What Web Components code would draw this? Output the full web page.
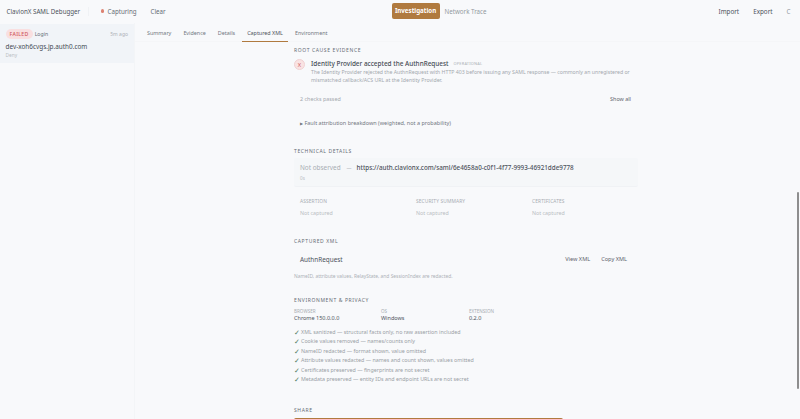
<!DOCTYPE html>
<html>
<head>
<meta charset="utf-8">
<title>ClavionX SAML Debugger</title>
<style>
html, body { margin: 0; height: 100%; overflow: hidden; background: #f8f9fb; }
body { font-family: "Noto Sans", "Open Sans", sans-serif; color: #3a4049; font-size: 6.5px; }
.shell { display: flex; height: 396px; }
</style>
</head>
<body>
<app-header></app-header>
<div class="shell">
	<session-list></session-list>
	<main-pane>
		<tab-bar></tab-bar>
		<root-cause></root-cause>
		<technical-details></technical-details>
		<captured-xml></captured-xml>
		<env-privacy></env-privacy>
		<share-block></share-block>
	</main-pane>
</div>
<script>
class AppHeader extends HTMLElement {
	constructor() {
		super();
		this.attachShadow({ mode: "open" }).innerHTML = `
		<style>
		:host { display: flex; align-items: center; height: 23px; padding: 0 0 1px 6.5px; box-sizing: border-box; font-size: 6.2px; color: #4d535c; }
		.brand { width: 81px; border-right: 1px solid #f0f2f5; }
		.capturing { display: flex; align-items: center; gap: 3.5px; margin-left: 12px; color: #666c75; }
		.dot { width: 3.5px; height: 3.5px; border-radius: 50%; background: #dd8272; }
		.clear { margin-left: 14px; color: #666c75; }
		.modes { display: flex; align-items: center; margin-left: 226px; }
		.on { width: 48px; height: 16px; line-height: 16px; text-align: center; background: #b07a3f; color: #fff; font-weight: 700; border-radius: 2px; }
		.off { margin-left: 5px; color: #94999f; }
		.right { display: flex; margin-left: auto; font-size: 6.3px; }
		.right span { margin-right: 14px; }
		.right span:last-child { margin-right: 9.5px; color: #94999f; }
		</style>
		<div class="brand">ClavionX SAML Debugger</div>
		<div class="capturing"><span class="dot"></span>Capturing</div>
		<div class="clear">Clear</div>
		<div class="modes"><div class="on">Investigation</div><div class="off">Network Trace</div></div>
		<div class="right"><span>Import</span><span>Export</span><span>C</span></div>`;
	}
}

class SessionList extends HTMLElement {
	constructor() {
		super();
		this.attachShadow({ mode: "open" }).innerHTML = `
		<style>
		:host { display: block; width: 135px; flex: none; border-right: 1px solid #f3f5f7; box-sizing: border-box; padding-top: 1px; }
		.item { background: #f1f4f8; height: 39px; padding: 5px 6px 0 5.5px; box-sizing: border-box; }
		.top { display: flex; align-items: center; }
		.pill { background: #f9dfe0; color: #d0575c; font-size: 5.2px; font-weight: 500; border-radius: 5px; height: 10px; line-height: 10px; padding: 0 4px; letter-spacing: .3px; }
		.kind { margin-left: 2px; font-size: 5.2px; color: #666c75; }
		.ago { margin-left: auto; font-size: 5px; color: #adb1b7; }
		.host { margin-top: 3px; font-size: 6.4px; color: #454b54; line-height: 9px; }
		.deny { margin-top: 1px; font-size: 4.8px; color: #b9bdc2; line-height: 7px; }
		</style>
		<div class="item">
			<div class="top"><span class="pill">FAILED</span><span class="kind">Login</span><span class="ago">5m ago</span></div>
			<div class="host">dev-xoh6cvgs.jp.auth0.com</div>
			<div class="deny">Deny</div>
		</div>`;
	}
}

class MainPane extends HTMLElement {
	constructor() {
		super();
		this.attachShadow({ mode: "open" }).innerHTML = `
		<style>
		:host { display: block; flex: 1; position: relative; overflow: hidden; }
		.thumb { position: absolute; right: 1px; top: 169px; width: 2px; height: 197px; background: #8e8e8e; border-radius: 1px; }
		</style>
		<slot></slot><div class="thumb"></div>`;
	}
}

class TabBar extends HTMLElement {
	constructor() {
		super();
		this.attachShadow({ mode: "open" }).innerHTML = `
		<style>
		:host { display: flex; height: 19px; padding-left: 6.5px; border-bottom: 1px solid #f5f6f8; box-sizing: border-box; font-size: 5.4px; color: #72777f; gap: 1px; }
		span { padding: 6px 5.5px 0; height: 18px; box-sizing: border-box; line-height: 8px; }
		.cur { color: #4d535c; border-bottom: 1px solid #b07a3f; height: 19px; }
		</style>
		<span>Summary</span><span>Evidence</span><span>Details</span><span class="cur">Captured XML</span><span>Environment</span>`;
	}
}

const sectionCss = `
	:host { display: block; margin-left: 159px; width: 344px; }
	h3 { margin: 0; font-size: 5px; font-weight: 400; letter-spacing: .62px; line-height: 7px; color: #666c75; }
`;

class RootCause extends HTMLElement {
	constructor() {
		super();
		this.attachShadow({ mode: "open" }).innerHTML = `
		<style>${sectionCss}
		:host { padding-top: 5px; }
		.row { display: flex; margin: 5px 0 0; }
		.x { width: 11px; height: 11px; border-radius: 50%; background: #f9e3e3; border: .5px solid #f0d2d3; box-sizing: border-box; color: #cf5a5e; font-size: 5.6px; line-height: 10px; text-align: center; flex: none; margin-right: 6px; }
		.title { font-size: 6.4px; color: #454b54; font-weight: 500; line-height: 9px; display: flex; align-items: center; }
		.tag { font-size: 3.9px; color: #b5b9be; margin-left: 5px; letter-spacing: .2px; }
		.desc { font-size: 5.2px; line-height: 8px; color: #a3a8ae; width: 324px; }
		.checks { display: flex; justify-content: space-between; margin: 11px 7px 0 6px; line-height: 8px; font-size: 5.4px; color: #a3a8ae; }
		.checks b { font-weight: 400; color: #5d636c; }
		.fault { margin: 16px 0 0 6px; line-height: 8px; font-size: 5.5px; color: #72777f; }
		.fault i { font-style: normal; font-size: 4px; }
		</style>
		<h3>ROOT CAUSE EVIDENCE</h3>
		<div class="row">
			<div class="x">X</div>
			<div>
				<div class="title">Identity Provider accepted the AuthnRequest<span class="tag">OPERATIONAL</span></div>
				<div class="desc">The Identity Provider rejected the AuthnRequest with HTTP 403 before issuing any SAML response — commonly an unregistered or mismatched callback/ACS URL at the Identity Provider.</div>
			</div>
		</div>
		<div class="checks"><span>2 checks passed</span><b>Show all</b></div>
		<div class="fault"><i>▶</i> Fault attribution breakdown (weighted, not a probability)</div>`;
	}
}

class TechnicalDetails extends HTMLElement {
	constructor() {
		super();
		this.attachShadow({ mode: "open" }).innerHTML = `
		<style>${sectionCss}
		:host { padding-top: 20px; }
		.card { margin-top: 3px; height: 29px; background: #f5f7f9; border-bottom: 1px solid #f0f2f5; box-sizing: border-box; padding: 5px 6px 0; border-radius: 2px; }
		.line { display: flex; align-items: center; line-height: 10px; font-size: 6.4px; color: #a8adb3; }
		.dash { margin: 0 5px 0 6px; font-size: 5px; }
		.url { font-size: 6.3px; color: #4d535c; font-weight: 500; }
		.time { font-size: 4.6px; color: #b9bdc2; line-height: 7px; margin-top: 2px; }
		.cols { display: grid; grid-template-columns: 116px 116px 1fr; padding: 11px 6px 0; }
		.lab { font-size: 4.9px; color: #a8adb3; line-height: 7px; letter-spacing: .1px; }
		.val { font-size: 5.3px; color: #b9bdc2; line-height: 8px; margin-top: 4px; }
		</style>
		<h3>TECHNICAL DETAILS</h3>
		<div class="card">
			<div class="line">Not observed<span class="dash">—</span><span class="url">https://auth.clavionx.com/saml/6e4658a0-c0f1-4f77-9993-46921dde9778</span></div>
			<div class="time">0s</div>
		</div>
		<div class="cols">
			<div><div class="lab">ASSERTION</div><div class="val">Not captured</div></div>
			<div><div class="lab">SECURITY SUMMARY</div><div class="val">Not captured</div></div>
			<div><div class="lab">CERTIFICATES</div><div class="val">Not captured</div></div>
		</div>`;
	}
}

class CapturedXml extends HTMLElement {
	constructor() {
		super();
		this.attachShadow({ mode: "open" }).innerHTML = `
		<style>${sectionCss}
		:host { padding-top: 21px; }
		.row { display: flex; align-items: center; height: 20px; margin-top: 4px; padding: 0 11px 0 6px; font-size: 5.6px; color: #5d636c; }
		.name { font-size: 6.4px; color: #4d535c; margin-right: auto; }
		.row span + span { margin-left: 11px; }
		.note { margin-top: 4px; line-height: 7px; font-size: 4.9px; color: #adb1b7; }
		</style>
		<h3>CAPTURED XML</h3>
		<div class="row"><div class="name">AuthnRequest</div><span>View XML</span><span>Copy XML</span></div>
		<div class="note">NameID, attribute values, RelayState, and SessionIndex are redacted.</div>`;
	}
}

class EnvPrivacy extends HTMLElement {
	constructor() {
		super();
		this.attachShadow({ mode: "open" }).innerHTML = `
		<style>${sectionCss}
		:host { padding-top: 17px; }
		.cols { display: grid; grid-template-columns: 87px 88px 1fr; margin-top: 4px; }
		.lab { font-size: 4.6px; color: #a8adb3; line-height: 6px; }
		.val { font-size: 5.5px; color: #4d535c; line-height: 8px; }
		ul { list-style: none; margin: 6px 0 0; padding: 0; }
		li { display: flex; gap: 2.5px; height: 9.4px; line-height: 9.4px; font-size: 5.35px; color: #999ea5; }
		li b { font-weight: 400; font-size: 7px; color: #4f7c62; width: 4.5px; }
		</style>
		<h3>ENVIRONMENT &amp; PRIVACY</h3>
		<div class="cols">
			<div><div class="lab">BROWSER</div><div class="val">Chrome 150.0.0.0</div></div>
			<div><div class="lab">OS</div><div class="val">Windows</div></div>
			<div><div class="lab">EXTENSION</div><div class="val">0.2.0</div></div>
		</div>
		<ul>
			<li><b>✓</b>XML sanitized — structural facts only, no raw assertion included</li>
			<li><b>✓</b>Cookie values removed — names/counts only</li>
			<li><b>✓</b>NameID redacted — format shown, value omitted</li>
			<li><b>✓</b>Attribute values redacted — names and count shown, values omitted</li>
			<li><b>✓</b>Certificates preserved — fingerprints are not secret</li>
			<li><b>✓</b>Metadata preserved — entity IDs and endpoint URLs are not secret</li>
		</ul>`;
	}
}

class ShareBlock extends HTMLElement {
	constructor() {
		super();
		this.attachShadow({ mode: "open" }).innerHTML = `
		<style>${sectionCss}
		:host { padding-top: 23px; }
		.bar { margin-top: 4px; width: 269px; height: 20px; background: #b07a3f; border-radius: 2px; }
		</style>
		<h3>SHARE</h3>
		<div class="bar"></div>`;
	}
}

customElements.define("app-header", AppHeader);
customElements.define("session-list", SessionList);
customElements.define("main-pane", MainPane);
customElements.define("tab-bar", TabBar);
customElements.define("root-cause", RootCause);
customElements.define("technical-details", TechnicalDetails);
customElements.define("captured-xml", CapturedXml);
customElements.define("env-privacy", EnvPrivacy);
customElements.define("share-block", ShareBlock);
</script>
</body>
</html>
